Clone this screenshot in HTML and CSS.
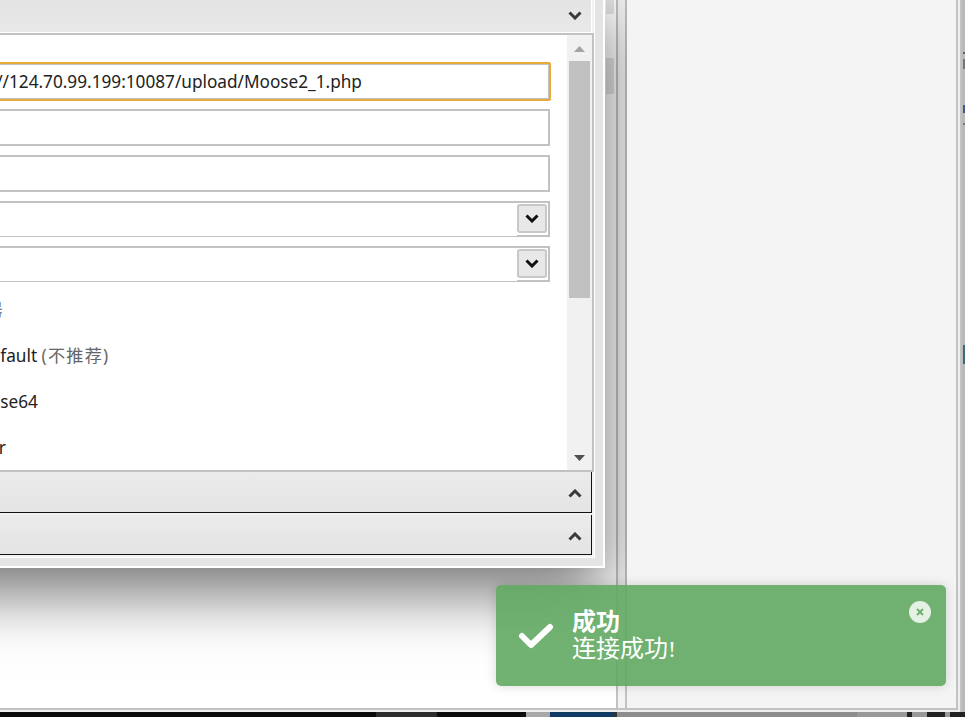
FILE: index.html
```html
<!DOCTYPE html>
<html lang="zh">
<head>
<meta charset="utf-8">
<title>连接成功</title>
<link rel="stylesheet" href="styles.css">
</head>
<body>
<div class="screen">
  <div class="frame">
    <div class="app">
      <div class="left">
        <div class="pane-thumb pane-thumb-a"></div>
        <div class="pane-thumb pane-thumb-b"></div>
        <section class="dialog">
          <div class="stack">
            <header class="head head-open">
              <svg class="chev" viewBox="0 0 14 9"><path d="M1.5 1.5 7 7l5.500-5.500"/></svg>
            </header>
            <div class="body">
              <div class="form">
                <div class="fields">
                  <input class="field field-focus" type="text" value="http://124.70.99.199:10087/upload/Moose2_1.php">
                  <input class="field" type="text" value="">
                  <input class="field" type="text" value="">
                  <div class="select">
                    <span class="select-value"></span>
                    <span class="select-side"><span class="select-btn"><svg class="chev chev-black" viewBox="0 0 14 9"><path d="M1.5 1.500 7 7l5.500-5.500"/></svg></span></span>
                  </div>
                  <div class="select">
                    <span class="select-value"></span>
                    <span class="select-side"><span class="select-btn"><svg class="chev chev-black" viewBox="0 0 14 9"><path d="M1.5 1.500 7 7l5.500-5.500"/></svg></span></span>
                  </div>
                </div>
                <div class="radios">
                  <div class="row row-hint">编码器</div>
                  <div class="row">default <span class="dim">(不推荐)</span></div>
                  <div class="row">base64</div>
                  <div class="row">chr</div>
                </div>
              </div>
              <div class="scroll">
                <svg class="arrow arrow-up" viewBox="0 0 11 6"><path d="M5.500 0 11 6H0z"/></svg>
                <div class="scroll-track"><div class="scroll-thumb"></div></div>
                <svg class="arrow arrow-down" viewBox="0 0 11 6"><path d="M0 0h11L5.500 6z"/></svg>
              </div>
            </div>
            <header class="head head-closed">
              <svg class="chev" viewBox="0 0 14 9"><path d="M1.500 7.500 7 2l5.500 5.500"/></svg>
            </header>
            <header class="head head-closed head-last">
              <svg class="chev" viewBox="0 0 14 9"><path d="M1.500 7.500 7 2l5.500 5.500"/></svg>
            </header>
          </div>
        </section>
      </div>
      <div class="splitter"></div>
      <div class="right"></div>
    </div>
    <aside class="toast">
      <svg class="toast-check" viewBox="0 0 36 26"><path d="M4 13l9 9L32 4"/></svg>
      <div class="toast-text">
        <div class="toast-title">成功</div>
        <div class="toast-msg">连接成功!</div>
      </div>
      <span class="toast-close"><svg viewBox="0 0 8 8"><path d="M1 1l6 6M7 1 1 7"/></svg></span>
    </aside>
  </div>
  <div class="edge"></div>
</div>
<footer class="taskbar">
  <span class="tb tb-black"></span>
  <span class="tb tb-dim"></span>
  <span class="tb tb-black2"></span>
  <span class="tb tb-grey"></span>
  <span class="tb tb-navy"></span>
  <span class="tb tb-dark"></span>
  <span class="tb tb-mid"></span>
  <span class="tb tb-mid2"></span>
  <span class="tb tb-glyph"></span>
  <span class="tb tb-mid3"></span>
  <span class="tb tb-glyph2"></span>
  <span class="tb tb-mid4"></span>
  <span class="tb tb-glyph3"></span>
</footer>
</body>
</html>
```
FILE: styles.css
```css
* { box-sizing: border-box; }
html, body { margin: 0; padding: 0; width: 965px; height: 717px; overflow: hidden; background: #fff; }
body { font-family: "Noto Sans", "Noto Sans CJK SC", sans-serif; font-size: 17.2px; color: #222; position: relative; }

.screen { display: flex; height: 712px; }
.frame { position: relative; width: 962px; height: 712px; padding: 0 2px 2px 0; border-right: 2px solid #c2c2c2; background: #eee; }
.edge {
  width: 3px;
  border-left: 1px solid #b9b9b9;
  background: linear-gradient(#b9b9b9 0 52px, #666 52px 54px, #b9b9b9 54px 59px, #777 59px 69px, #b9b9b9 69px 105px, #46578f 105px 113px, #b9b9b9 113px 123px, #777 123px 125px, #b9b9b9 125px 345px, #3b6b78 345px 364px, #b9b9b9 364px);
}
.app { display: flex; width: 958px; height: 710px; border-right: 2px solid #c2c2c2; border-bottom: 2px solid #c2c2c2; }

.left { position: relative; width: 616px; background: #fff; }
.splitter { position: relative; width: 11px; border-left: 2px solid #c2c2c2; border-right: 2px solid #c2c2c2; background: #f4f4f4; }
.right { position: relative; z-index: 2; flex: 1; background: #f4f4f4; }

.pane-thumb { position: absolute; z-index: 2; left: 606px; width: 8px; background: rgba(0, 0, 0, .1); }
.pane-thumb-a { top: 0; height: 14px; }
.pane-thumb-b { top: 58px; height: 36px; }

.dialog {
  position: absolute;
  z-index: 1;
  left: -240px;
  top: -10px;
  width: 845px;
  padding: 8px;
  background: #e4e4e4;
  border: 2px solid #fff;
  box-shadow: 0 25px 60px rgba(0, 0, 0, .55);
}
.stack { display: flex; flex-direction: column; background: #f2f2f2; border-right: 1px solid #fff; border-bottom: 1px solid #fff; padding-bottom: 2px; }

.head {
  display: flex;
  align-items: center;
  justify-content: flex-end;
  margin-right: 2px;
  padding-right: 9px;
  background: linear-gradient(#ebebeb, #e4e4e4);
}
.head-open { height: 33px; padding-bottom: 1px; background: linear-gradient(#e4e4e4, #e8e8e8); border-bottom: 1px solid #fff; border-right: 1px solid #fff; }
.head-closed { height: 41px; padding-top: 3px; border-right: 1px solid #111; border-bottom: 1px solid #111; }
.head-last { height: 40px; margin-top: 2px; }

.chev { display: block; width: 14px; height: 9px; fill: none; stroke: #3a3a3a; stroke-width: 3; }
.chev-black { stroke: #111; }

.body { display: flex; height: 439px; background: #fff; border: 2px solid #c2c2c2; }
.form { flex: 1; min-width: 0; overflow: hidden; padding: 27px 17px 0 131px; }
.fields { display: flex; flex-direction: column; gap: 9px; }

.field {
  display: block;
  width: 100%;
  height: 37px;
  padding: 0 8px 0 53px;
  border: 2px solid #c2c2c2;
  background: #fff;
  font: inherit;
  color: #222;
  outline: none;
}
.field-focus {
  width: calc(100% + 1px);
  height: 39px;
  margin-bottom: -1px;
  border-color: #e9aa3c;
  border-radius: 2px;
  box-shadow: inset 0 0 0 1px #c2c2c2;
}

.select { display: flex; height: 36px; border: 2px solid #c2c2c2; border-bottom-width: 1px; background: #fff; }
.select-value { flex: 1; }
.select-side { display: block; width: 31px; border-bottom: 1px solid #c2c2c2; }
.select-btn {
  display: flex;
  align-items: center;
  justify-content: center;
  width: 30px;
  height: 29px;
  margin-top: 1px;
  border: 2px solid #c8c8c8;
  border-radius: 3px;
  background: #e8e8e8;
}

.radios { margin-top: 5px; }
.row { height: 46px; line-height: 46px; padding-left: 77px; white-space: nowrap; }
.row-hint { padding-left: 48px; color: #777; }
.dim { color: #666; letter-spacing: 1.2px; }

.scroll { display: flex; flex-direction: column; align-items: center; width: 25px; background: #f1f1f1; }
.arrow { display: block; width: 11px; height: 6px; flex: none; }
.arrow-up { margin-top: 11px; fill: #a3a3a3; }
.arrow-down { margin: 0 0 9px; fill: #505050; }
.scroll-track { flex: 1; width: 100%; padding: 9px 2px 0 2px; }
.scroll-thumb { height: 237px; background: #c1c1c1; }

.toast {
  position: absolute;
  z-index: 3;
  left: 496px;
  top: 585px;
  width: 450px;
  height: 101px;
  display: flex;
  align-items: center;
  padding-left: 22px;
  border-radius: 5px;
  background: rgba(98, 170, 99, .9);
  box-shadow: 0 0 12px rgba(0, 0, 0, .15);
  color: #fff;
}
.toast-check { flex: none; width: 36px; height: 26px; margin-right: 18px; margin-top: 1px; fill: none; stroke: #fff; stroke-width: 6; stroke-linecap: round; stroke-linejoin: round; }
.toast-text { font-family: "Liberation Serif", "Noto Sans CJK SC", serif; font-size: 24px; line-height: 27px; }
.toast-title { font-weight: 700; }
.toast-close {
  position: absolute;
  right: 15px;
  top: 16px;
  width: 22px;
  height: 22px;
  display: flex;
  align-items: center;
  justify-content: center;
  border-radius: 50%;
  background: #e4f1e4;
}
.toast-close svg { width: 8px; height: 8px; fill: none; stroke: #6aaf6b; stroke-width: 1.8; }

.taskbar { display: flex; height: 5px; }
.tb { display: block; height: 100%; }
.tb-black { width: 376px; background: #0b0b0b; }
.tb-dim { width: 61px; background: #2c2c2c; }
.tb-black2 { width: 89px; background: #0b0b0b; }
.tb-grey { width: 24px; background: #a8a8a8; }
.tb-navy { width: 63px; background: #0f3a64; }
.tb-dark { width: 4px; background: #333; }
.tb-mid { width: 240px; background: #8d8d8d; }
.tb-mid2 { width: 50px; background: #999; }
.tb-glyph { width: 5px; background: #222; }
.tb-mid3 { width: 15px; background: #999; }
.tb-glyph2 { width: 18px; background: #222; }
.tb-mid4 { width: 5px; background: #999; }
.tb-glyph3 { width: 15px; background: #222; }
```
